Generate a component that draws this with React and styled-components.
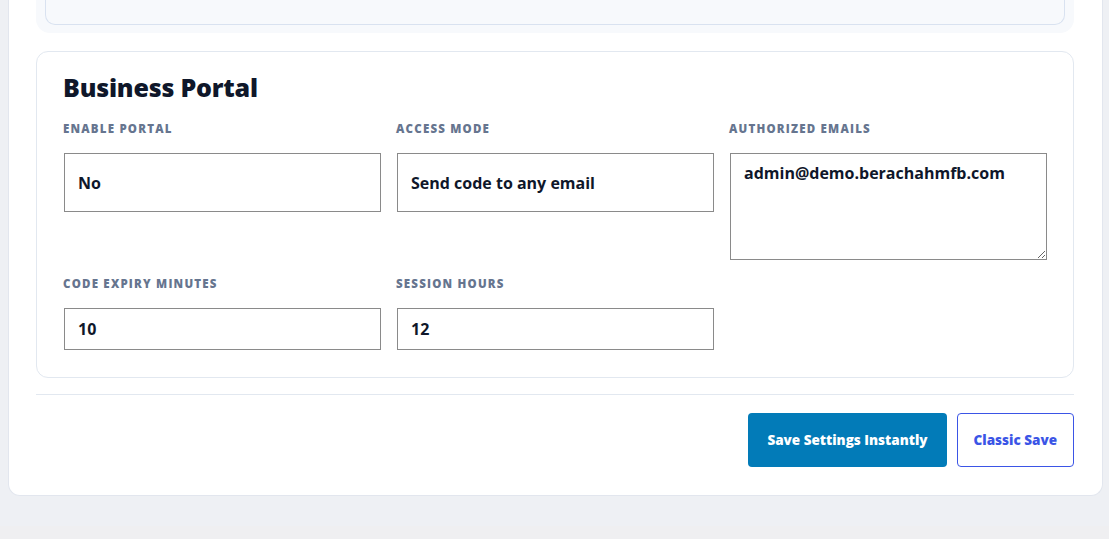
import styled, { createGlobalStyle } from "styled-components";

const GlobalStyle = createGlobalStyle`
  html {
    background: #efeff1;
  }
  body {
    margin: 0;
    font-family: "Open Sans", "Liberation Sans", sans-serif;
    color: #0f172a;
  }
`;

const Page = styled.div`
  background: #eef0f4;
  padding: 0 6px 30px 8px;
  overflow: hidden;
`;

const Card = styled.div`
  background: #ffffff;
  border: 1px solid #e2e6ee;
  border-top: none;
  border-radius: 0 0 12px 12px;
  padding: 0 28px 28px 27px;
`;

const PrevPanel = styled.div`
  background: #f7f9fc;
  border-radius: 0 0 14px 14px;
  padding: 0 9px 8px;
  margin-top: -22px;
`;

const PrevBox = styled.div`
  border: 1px solid #d9e2f0;
  border-top: none;
  border-radius: 0 0 10px 10px;
  padding: 0 23px 16px;
`;

const PrevTitle = styled.h3`
  margin: 0;
  font-size: 18px;
  line-height: 30px;
  font-weight: 800;
`;

const Section = styled.section`
  margin-top: 18px;
  border: 1px solid #e2e8f0;
  border-radius: 12px;
  padding: 20px 26px 27px 27px;
`;

const Title = styled.h2`
  margin: 0 0 21px -1px;
  font-size: 25px;
  line-height: 30px;
  font-weight: 800;
  letter-spacing: -0.2px;
  color: #0f172a;
`;

const Grid = styled.div`
  display: grid;
  grid-template-columns: repeat(3, 1fr);
  column-gap: 16px;
  row-gap: 18px;
  align-items: start;
`;

const Field = styled.label`
  display: flex;
  flex-direction: column;
  gap: 18px;
`;

const Label = styled.span`
  margin-left: -1px;
  font-size: 11.5px;
  line-height: 12px;
  font-weight: 800;
  letter-spacing: 1.2px;
  text-transform: uppercase;
  color: #66758f;
`;

const Input = styled.input`
  box-sizing: border-box;
  width: 100%;
  height: ${(p) => (p.$tall ? "59px" : "42px")};
  margin: 0;
  padding: 0 13px;
  border: 1px solid #8a8a8a;
  border-radius: 0;
  background: #ffffff;
  font-family: inherit;
  font-size: 16px;
  font-weight: 700;
  color: #0f172a;
  outline: none;
`;

const TextArea = styled.textarea`
  box-sizing: border-box;
  width: 100%;
  height: 107px;
  margin: 0;
  padding: 8px 13px;
  border: 1px solid #8a8a8a;
  border-radius: 0;
  font-family: inherit;
  font-size: 16px;
  font-weight: 700;
  color: #0f172a;
  outline: none;
`;

const Divider = styled.hr`
  margin: 16px 0 18px;
  border: none;
  border-top: 1px solid #e2e8f0;
`;

const Actions = styled.div`
  display: flex;
  justify-content: flex-end;
  gap: 10px;
`;

const Button = styled.button`
  height: 54px;
  padding: 0 ${(p) => p.$pad}px;
  border-radius: 4px;
  font-family: inherit;
  font-size: 13.5px;
  font-weight: 800;
  cursor: pointer;
`;

const Primary = styled(Button)`
  background: #027bb8;
  color: #ffffff;
  border: none;
`;

const Secondary = styled(Button)`
  background: #ffffff;
  color: #3b55e6;
  border: 1px solid #3b55e6;
`;

export default function App() {
  return (
    <>
      <GlobalStyle />
      <Page>
        <Card>
          <PrevPanel>
            <PrevBox>
              <PrevTitle>License</PrevTitle>
            </PrevBox>
          </PrevPanel>

          <Section>
            <Title>Business Portal</Title>
            <Grid>
              <Field>
                <Label>Enable Portal</Label>
                <Input $tall readOnly value="No" />
              </Field>
              <Field>
                <Label>Access Mode</Label>
                <Input $tall readOnly value="Send code to any email" />
              </Field>
              <Field>
                <Label>Authorized Emails</Label>
                <TextArea readOnly value="admin@demo.berachahmfb.com" />
              </Field>
              <Field>
                <Label>Code Expiry Minutes</Label>
                <Input readOnly value="10" />
              </Field>
              <Field>
                <Label>Session Hours</Label>
                <Input readOnly value="12" />
              </Field>
            </Grid>
          </Section>

          <Divider />
          <Actions>
            <Primary type="button" $pad={19}>Save Settings Instantly</Primary>
            <Secondary type="button" $pad={16}>Classic Save</Secondary>
          </Actions>
        </Card>
      </Page>
    </>
  );
}
